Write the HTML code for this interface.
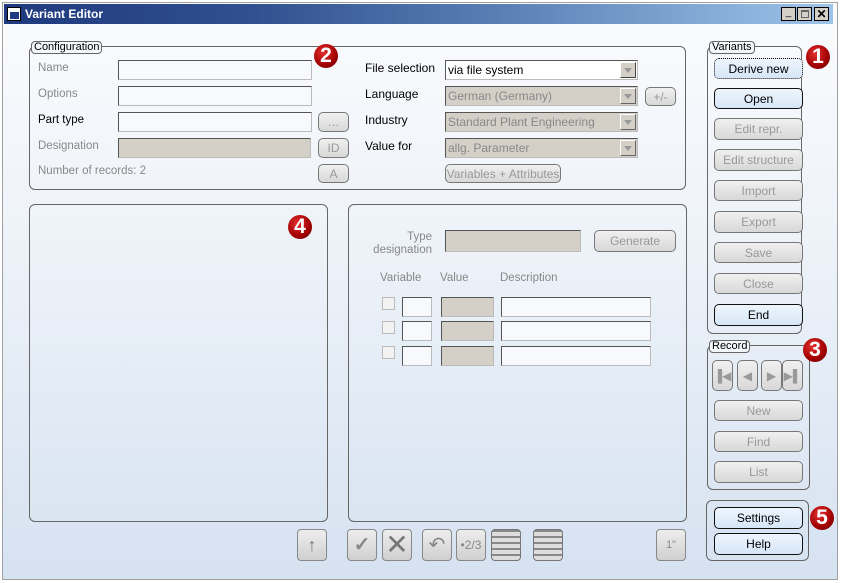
<!DOCTYPE html>
<html><head><meta charset="utf-8"><style>
*{box-sizing:border-box;margin:0;padding:0}
body{width:843px;height:583px;background:#fff;position:relative;overflow:hidden;font-family:"Liberation Sans",sans-serif;font-size:12px}
.a{position:absolute;white-space:nowrap}
#win{left:2px;top:2px;width:836px;height:578px;border:1px solid #a0a0a0;background:linear-gradient(#fafbfd 0%,#eef3f9 40%,#d6e2f1 100%)}
#title{left:4px;top:4px;width:829px;height:20px;background:linear-gradient(90deg,#1e3a7e 0%,#30508f 30%,#5a7fb5 60%,#9ec4ea 100%);color:#fff;font-weight:bold;font-size:12px;line-height:20px;padding-left:21px}
.grp{border:1px solid #666;border-radius:6px}
.leg{background:#f4f7fb;border:1px solid #666;border-radius:4px;font-size:11px;line-height:11px;padding:0 2px;color:#000}
.lbl{color:#888;font-size:11.5px}
.inp{border:1px solid #bbb;border-top-color:#555;border-left-color:#555;background:#f7f9fc;height:20px}
.dis{background:#d4d0c8}
.btn{border:1px solid #777;border-radius:5px;background:linear-gradient(#f0f0f0,#d8d8d8);color:#999;font-size:12px;display:flex;align-items:center;justify-content:center}
.act{background:linear-gradient(#eef5fd,#d6e6f7);color:#000;border-color:#111}
.sel{border:1px solid #bbb;border-top-color:#555;border-left-color:#555;height:20px;font-size:12px;line-height:18px;padding-left:2px;color:#888;background:#d4d0c8}
.arr{position:absolute;right:1px;top:1px;width:16px;height:16px;background:#d4d0c8;border:1px solid #fff;border-right-color:#666;border-bottom-color:#666}
.arr:after{content:"";position:absolute;left:3px;top:5px;border:4px solid transparent;border-top:5px solid #999;border-bottom:0}
.badge{width:24px;height:24px;border-radius:50%;background:radial-gradient(circle at 40% 35%,#e53030,#a00000 60%,#600000);color:#fff;font-weight:bold;font-size:21px;line-height:24px;text-align:center;font-family:"Liberation Sans",sans-serif}
.ib{border:1px solid #888;border-radius:4px;background:linear-gradient(#eee,#d0d0d0);width:30px;height:32px;color:#888;text-align:center;font-size:13px;line-height:30px}
</style></head><body>
<div id="win" class="a"></div>
<div id="title" class="a">Variant Editor</div>
<div class="a" style="left:7px;top:7px;width:14px;height:14px;background:#fff;border:1px solid #000"><div class="a" style="left:2px;top:4px;width:9px;height:7px;background:#1e3a7e"></div></div>
<div class="a" style="left:781px;top:7px;width:15px;height:14px;background:#d4d0c8;border:1px solid #000;font-size:10px;line-height:10px;text-align:center">_</div>
<div class="a" style="left:797px;top:7px;width:15px;height:14px;background:#d4d0c8;border:1px solid #000"><div class="a" style="left:3px;top:2px;width:8px;height:8px;border:1px solid #666;border-top-width:2px"></div></div>
<div class="a" style="left:814px;top:7px;width:15px;height:14px;background:#d4d0c8;border:1px solid #000;font-size:12px;line-height:12px;text-align:center;font-weight:bold">✕</div>

<div class="a grp" style="left:29px;top:46px;width:657px;height:144px"></div>
<div class="a leg" style="left:31px;top:41px">Configuration</div>
<div class="a lbl" style="left:38px;top:62px">Name</div>
<div class="a lbl" style="left:38px;top:88px">Options</div>
<div class="a lbl" style="left:38px;top:114px;color:#000">Part type</div>
<div class="a lbl" style="left:38px;top:140px">Designation</div>
<div class="a lbl" style="left:38px;top:165px">Number of records: 2</div>
<div class="a inp" style="left:118px;top:60px;width:194px"></div>
<div class="a inp" style="left:118px;top:86px;width:194px"></div>
<div class="a inp" style="left:118px;top:112px;width:194px"></div>
<div class="a inp dis" style="left:118px;top:138px;width:193px"></div>
<div class="a btn" style="left:318px;top:112px;width:31px;height:20px">…</div>
<div class="a btn" style="left:318px;top:138px;width:31px;height:20px">ID</div>
<div class="a btn" style="left:318px;top:164px;width:31px;height:19px">A</div>
<div class="a" style="left:365px;top:61px">File selection</div>
<div class="a" style="left:365px;top:87px">Language</div>
<div class="a" style="left:365px;top:113px">Industry</div>
<div class="a" style="left:365px;top:139px">Value for</div>
<div class="a sel" style="left:445px;top:60px;width:193px;background:#fff;color:#000">via file system<div class="arr" style="border-color:#fff #444 #444 #fff"></div></div>
<div class="a sel" style="left:445px;top:86px;width:193px">German (Germany)<div class="arr"></div></div>
<div class="a sel" style="left:445px;top:112px;width:193px">Standard Plant Engineering<div class="arr"></div></div>
<div class="a sel" style="left:445px;top:138px;width:193px">allg. Parameter<div class="arr"></div></div>
<div class="a btn" style="left:645px;top:87px;width:31px;height:19px">+/-</div>
<div class="a btn" style="left:445px;top:164px;width:116px;height:19px">Variables + Attributes</div>
<div class="a badge" style="left:314px;top:44px">2</div>

<div class="a grp" style="left:707px;top:46px;width:95px;height:288px"></div>
<div class="a leg" style="left:709px;top:41px">Variants</div>
<div class="a btn act" style="left:714px;top:58px;width:89px;height:21px;border-style:dotted">Derive new</div>
<div class="a btn act" style="left:714px;top:88px;width:89px;height:21px">Open</div>
<div class="a btn" style="left:714px;top:118px;width:89px;height:22px">Edit repr.</div>
<div class="a btn" style="left:714px;top:149px;width:89px;height:22px">Edit structure</div>
<div class="a btn" style="left:714px;top:180px;width:89px;height:21px">Import</div>
<div class="a btn" style="left:714px;top:211px;width:89px;height:22px">Export</div>
<div class="a btn" style="left:714px;top:242px;width:89px;height:21px">Save</div>
<div class="a btn" style="left:714px;top:273px;width:89px;height:21px">Close</div>
<div class="a btn act" style="left:714px;top:304px;width:89px;height:22px">End</div>
<div class="a badge" style="left:806px;top:45px">1</div>

<div class="a grp" style="left:707px;top:345px;width:103px;height:145px"></div>
<div class="a leg" style="left:709px;top:340px">Record</div>
<div class="a btn" style="left:712px;top:360px;width:21px;height:31px">▐◀</div>
<div class="a btn" style="left:737px;top:360px;width:21px;height:31px">◀</div>
<div class="a btn" style="left:761px;top:360px;width:21px;height:31px">▶</div>
<div class="a btn" style="left:782px;top:360px;width:21px;height:31px">▶▌</div>
<div class="a btn" style="left:714px;top:400px;width:89px;height:21px">New</div>
<div class="a btn" style="left:714px;top:431px;width:89px;height:21px">Find</div>
<div class="a btn" style="left:714px;top:461px;width:89px;height:22px">List</div>
<div class="a badge" style="left:803px;top:338px">3</div>

<div class="a grp" style="left:706px;top:500px;width:103px;height:61px"></div>
<div class="a btn act" style="left:714px;top:507px;width:89px;height:22px">Settings</div>
<div class="a btn act" style="left:714px;top:533px;width:89px;height:22px">Help</div>
<div class="a badge" style="left:810px;top:506px">5</div>

<div class="a grp" style="left:29px;top:204px;width:299px;height:318px"></div>
<div class="a badge" style="left:288px;top:215px">4</div>
<div class="a grp" style="left:348px;top:204px;width:339px;height:318px"></div>
<div class="a lbl" style="left:372px;top:231px;width:60px;text-align:right;line-height:13px">Type<br>designation</div>
<div class="a inp dis" style="left:445px;top:230px;width:136px;height:22px"></div>
<div class="a btn" style="left:594px;top:230px;width:82px;height:22px">Generate</div>
<div class="a lbl" style="left:380px;top:272px">Variable</div>
<div class="a lbl" style="left:440px;top:272px">Value</div>
<div class="a lbl" style="left:500px;top:272px">Description</div>
<div class="a" style="left:382px;top:297px;width:13px;height:13px;border:1px solid #bbb;background:#f2f2f2"></div>
<div class="a" style="left:382px;top:321px;width:13px;height:13px;border:1px solid #bbb;background:#f2f2f2"></div>
<div class="a" style="left:382px;top:346px;width:13px;height:13px;border:1px solid #bbb;background:#f2f2f2"></div>
<div class="a inp" style="left:402px;top:297px;width:30px"></div>
<div class="a inp" style="left:402px;top:321px;width:30px"></div>
<div class="a inp" style="left:402px;top:346px;width:30px"></div>
<div class="a inp dis" style="left:441px;top:297px;width:53px"></div>
<div class="a inp dis" style="left:441px;top:321px;width:53px"></div>
<div class="a inp dis" style="left:441px;top:346px;width:53px"></div>
<div class="a inp" style="left:501px;top:297px;width:150px"></div>
<div class="a inp" style="left:501px;top:321px;width:150px"></div>
<div class="a inp" style="left:501px;top:346px;width:150px"></div>

<div class="a ib" style="left:297px;top:529px;font-size:18px;color:#777">↑</div>
<div class="a ib" style="left:347px;top:529px;font-size:20px;color:#888;font-weight:bold">✓</div>
<div class="a ib" style="left:382px;top:529px;font-size:28px;color:#777;line-height:30px">✕</div>
<div class="a ib" style="left:422px;top:529px;font-size:20px;color:#888">↶</div>
<div class="a ib" style="left:456px;top:529px;font-size:12px;color:#888">•2/3</div>
<div class="a ib" style="left:491px;top:529px;background:repeating-linear-gradient(#888 0 2px,#ddd 2px 6px);border-color:#777"></div>
<div class="a ib" style="left:533px;top:529px;background:repeating-linear-gradient(#888 0 2px,#ddd 2px 6px);border-color:#777"></div>
<div class="a ib" style="left:656px;top:529px;font-size:11px">1"</div>
</body></html>
